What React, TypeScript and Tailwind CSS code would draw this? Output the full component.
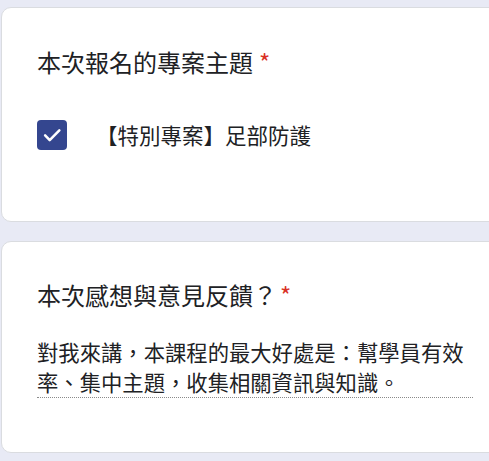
import React from "react";

const font = { fontFamily: '"Noto Sans CJK TC", "Noto Sans", sans-serif' };

export default function App() {
  return (
    <div
      className="h-[461px] w-[489px] overflow-hidden bg-[#e8eaf5] pt-[7px] pl-[1px] text-[#202124]"
      style={font}
    >
      <div className="h-[215px] w-[520px] rounded-[10px] border border-[#dadce0] bg-white pl-[35px] pt-[38px]">
        <div className="text-[24px] leading-[32px]">
          本次報名的專案主題<span className="ml-[6px] text-[#d93025]">*</span>
        </div>
        <div className="mt-[42px] flex items-center">
          <div className="flex h-[30px] w-[30px] items-center justify-center rounded-[4px] bg-[#34468f]">
            <svg width="22" height="22" viewBox="0 0 24 24" fill="none">
              <path d="M4.5 12.5l5 5L20 7" stroke="white" strokeWidth="2.8" strokeLinecap="round" strokeLinejoin="round" />
            </svg>
          </div>
          <div className="ml-[29px] text-[21.5px] leading-[30px]">【特別專案】足部防護</div>
        </div>
      </div>
      <div className="mt-[19px] h-[212px] w-[520px] rounded-[10px] border border-[#dadce0] bg-white pl-[35px] pt-[37px]">
        <div className="text-[24px] leading-[32px]">
          本次感想與意見反饋？<span className="ml-[3px] text-[#d93025]">*</span>
        </div>
        <div className="mt-[26px] w-[436px] border-b border-dotted border-[#8a8a8a] text-[21.33px] leading-[30px]">
          對我來講，本課程的最大好處是：幫學員有效率、集中主題，收集相關資訊與知識。
        </div>
      </div>
    </div>
  );
}
